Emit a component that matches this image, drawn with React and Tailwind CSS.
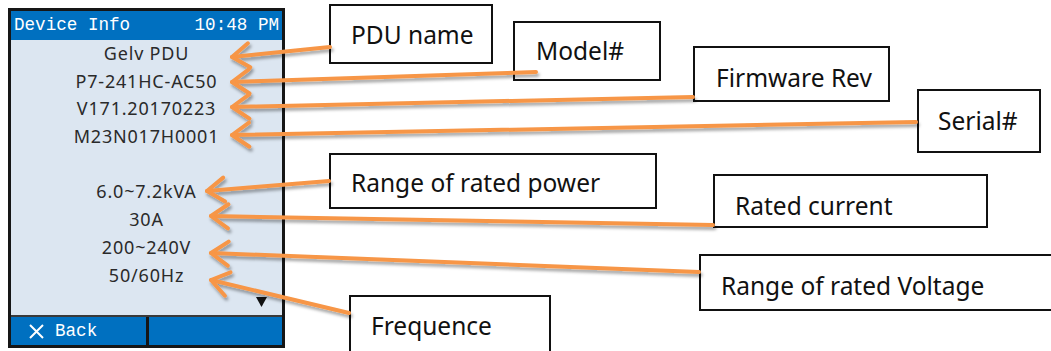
const rows = [
  "Gelv PDU",
  "P7-241HC-AC50",
  "V171.20170223",
  "M23N017H0001",
  "",
  "6.0~7.2kVA",
  "30A",
  "200~240V",
  "50/60Hz",
];

// callout boxes on the annotation canvas
const callouts = [
  { label: "PDU name", cls: "left-[329px] top-[4px] w-[164px] h-[60px] pt-[17px] pl-[20px]" },
  { label: "Model#", cls: "left-[513px] top-[21px] w-[148px] h-[60px] pt-[16px] pl-[21px]" },
  { label: "Firmware Rev", cls: "left-[693px] top-[46px] w-[197px] h-[56px] pt-[18px] pl-[21px]" },
  { label: "Serial#", cls: "left-[917px] top-[89px] w-[124px] h-[64px] pt-[18px] pl-[19px]" },
  { label: "Range of rated power", cls: "left-[329px] top-[153px] w-[328px] h-[56px] pt-[16px] pl-[20px]" },
  { label: "Rated current", cls: "left-[713px] top-[174px] w-[275px] h-[54px] pt-[18px] pl-[20px]" },
  { label: "Range of rated Voltage", cls: "left-[699px] top-[254px] w-[380px] h-[57px] pt-[18px] pl-[20px]" },
  { label: "Frequence", cls: "left-[349px] top-[295px] w-[202px] h-[70px] pt-[17px] pl-[20px]" },
];

// [tipX, tipY, endX, endY]
const arrows = [
  [232, 57, 330, 47],
  [232, 82, 536, 72],
  [232, 107, 693, 97],
  [232, 135, 916, 122],
  [207, 191, 329, 181],
  [211, 216, 713, 225],
  [211, 253, 699, 272],
  [211, 280, 349, 313],
];

function head(tx, ty, ex, ey) {
  const len = Math.hypot(ex - tx, ey - ty);
  const ux = (ex - tx) / len;
  const uy = (ey - ty) / len;
  const a = (35 * Math.PI) / 180;
  const L = 21;
  const r = (s) => [
    tx + L * (ux * Math.cos(s * a) - uy * Math.sin(s * a)),
    ty + L * (ux * Math.sin(s * a) + uy * Math.cos(s * a)),
  ];
  const [x1, y1] = r(1);
  const [x2, y2] = r(-1);
  return `${x1},${y1} ${tx},${ty} ${x2},${y2}`;
}

const mono = "font-['Liberation_Mono','DejaVu_Sans_Mono',monospace]";

export default function App() {
  return (
    <div className="relative w-[1051px] h-[351px] bg-white overflow-hidden">
      {/* Device screen */}
      <div className="pt-[8px] pl-[8px]">
        <div className="w-[277px] h-[340px] border-[3px] border-[#161616] flex flex-col">
          <div className={`h-[29px] bg-[#0070c0] flex items-center justify-between px-[3px] text-white text-[17.6px] ${mono}`}>
            <span>Device Info</span>
            <span>10:48 PM</span>
          </div>
          <div className="relative flex-1 bg-[#dce6f1] flex flex-col items-center font-['Noto_Sans',sans-serif] text-[18px] tracking-[0.8px] text-[#2a2a2a] leading-[27.7px]">
            {rows.map((r, i) => (
              <div key={i} className="h-[27.7px]">{r}</div>
            ))}
            <svg className="absolute right-[15px] bottom-[8px]" width="11" height="10" viewBox="0 0 11 10">
              <polygon points="0,0 11,0 5.5,10" fill="#111" />
            </svg>
          </div>
          <div className="h-[2px] bg-[#3a3a3a]" />
          <div className={`h-[28px] flex text-white text-[17.6px] ${mono}`}>
            <div className="w-[135px] bg-[#0070c0] flex items-center pl-[18px] gap-[11px]">
              <svg width="15" height="15" viewBox="0 0 15 15">
                <path d="M1 1 L14 14 M14 1 L1 14" stroke="#fff" strokeWidth="2" />
              </svg>
              <span>Back</span>
            </div>
            <div className="w-[3px] bg-[#161616]" />
            <div className="flex-1 bg-[#0070c0]" />
          </div>
        </div>
      </div>

      {/* Callouts */}
      {callouts.map((c) => (
        <div
          key={c.label}
          className={`absolute bg-white border-2 border-[#111] font-['Noto_Sans',sans-serif] text-[24.5px] leading-none text-[#111] whitespace-nowrap ${c.cls}`}
        >
          {c.label}
        </div>
      ))}

      {/* Leader arrows */}
      <svg className="absolute inset-0 pointer-events-none" width="1051" height="351">
        <defs>
          <filter id="sh" x="-20%" y="-50%" width="140%" height="200%">
            <feDropShadow dx="1.5" dy="3" stdDeviation="1.6" floodColor="#000" floodOpacity="0.35" />
          </filter>
        </defs>
        <g stroke="#f79646" strokeWidth="4" fill="none" strokeLinecap="round" strokeLinejoin="round" filter="url(#sh)">
          {arrows.map(([tx, ty, ex, ey], i) => (
            <g key={i}>
              <line x1={tx} y1={ty} x2={ex} y2={ey} />
              <polyline points={head(tx, ty, ex, ey)} />
            </g>
          ))}
        </g>
      </svg>
    </div>
  );
}
